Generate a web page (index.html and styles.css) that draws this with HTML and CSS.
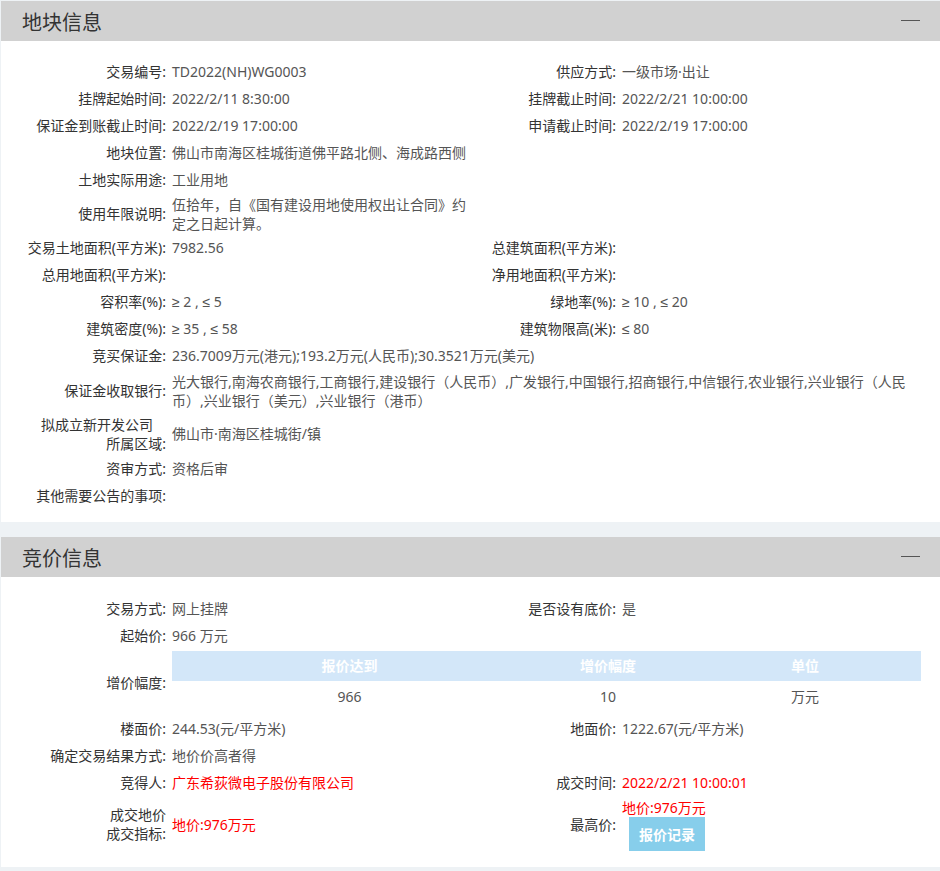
FILE: index.html
```html
<!DOCTYPE html>
<html>
<head>
	<title>地块信息</title>
	<meta charset="UTF-8" />
	<link rel="stylesheet" href="styles.css">
</head>
<body>

<div class="panel">
	<div class="panel-head">
		<span class="panel-title">地块信息</span>
		<span class="collapse"></span>
	</div>
	<div class="panel-body">
		<div class="info-grid">
			<div class="lbl">交易编号:</div>
			<div class="val">TD2022(NH)WG0003</div>
			<div class="lbl">供应方式:</div>
			<div class="val">一级市场·出让</div>

			<div class="lbl">挂牌起始时间:</div>
			<div class="val">2022/2/11 8:30:00</div>
			<div class="lbl">挂牌截止时间:</div>
			<div class="val">2022/2/21 10:00:00</div>

			<div class="lbl">保证金到账截止时间:</div>
			<div class="val">2022/2/19 17:00:00</div>
			<div class="lbl">申请截止时间:</div>
			<div class="val">2022/2/19 17:00:00</div>

			<div class="lbl">地块位置:</div>
			<div class="val span">佛山市南海区桂城街道佛平路北侧、海成路西侧</div>

			<div class="lbl">土地实际用途:</div>
			<div class="val span">工业用地</div>

			<div class="lbl">使用年限说明:</div>
			<div class="val">伍拾年，自《国有建设用地使用权出让合同》约定之日起计算。</div>
			<div class="lbl"></div>
			<div class="val"></div>

			<div class="lbl">交易土地面积(平方米):</div>
			<div class="val">7982.56</div>
			<div class="lbl">总建筑面积(平方米):</div>
			<div class="val"></div>

			<div class="lbl">总用地面积(平方米):</div>
			<div class="val"></div>
			<div class="lbl">净用地面积(平方米):</div>
			<div class="val"></div>

			<div class="lbl">容积率(%):</div>
			<div class="val"><span class="op">≥</span> 2 , <span class="op">≤</span> 5</div>
			<div class="lbl">绿地率(%):</div>
			<div class="val"><span class="op">≥</span> 10 , <span class="op">≤</span> 20</div>

			<div class="lbl">建筑密度(%):</div>
			<div class="val"><span class="op">≥</span> 35 , <span class="op">≤</span> 58</div>
			<div class="lbl">建筑物限高(米):</div>
			<div class="val"><span class="op">≤</span> 80</div>

			<div class="lbl">竞买保证金:</div>
			<div class="val span">236.7009万元(港元);193.2万元(人民币);30.3521万元(美元)</div>

			<div class="lbl">保证金收取银行:</div>
			<div class="val span two">光大银行,南海农商银行,工商银行,建设银行（人民币）,广发银行,中国银行,招商银行,中信银行,农业银行,兴业银行（人民币）,兴业银行（美元）,兴业银行（港币）</div>

			<div class="lbl two"><span class="lbl-first">拟成立新开发公司</span>所属区域:</div>
			<div class="val span">佛山市·南海区桂城街/镇</div>

			<div class="lbl">资审方式:</div>
			<div class="val span">资格后审</div>

			<div class="lbl">其他需要公告的事项:</div>
			<div class="val span"></div>
		</div>
	</div>
</div>

<div class="panel">
	<div class="panel-head">
		<span class="panel-title">竞价信息</span>
		<span class="collapse"></span>
	</div>
	<div class="panel-body panel-body-last">
		<div class="info-grid">
			<div class="lbl">交易方式:</div>
			<div class="val">网上挂牌</div>
			<div class="lbl">是否设有底价:</div>
			<div class="val">是</div>

			<div class="lbl">起始价:</div>
			<div class="val span">966 万元</div>

			<div class="lbl">增价幅度:</div>
			<div class="val span table-cell">
				<table class="step-table">
					<thead>
						<tr>
							<th class="col-reach">报价达到</th>
							<th class="col-step">增价幅度</th>
							<th class="col-unit">单位</th>
						</tr>
					</thead>
					<tbody>
						<tr>
							<td>966</td>
							<td>10</td>
							<td>万元</td>
						</tr>
					</tbody>
				</table>
			</div>

			<div class="lbl">楼面价:</div>
			<div class="val">244.53(元/平方米)</div>
			<div class="lbl">地面价:</div>
			<div class="val">1222.67(元/平方米)</div>

			<div class="lbl">确定交易结果方式:</div>
			<div class="val span">地价价高者得</div>

			<div class="lbl">竞得人:</div>
			<div class="val red">广东希荻微电子股份有限公司</div>
			<div class="lbl">成交时间:</div>
			<div class="val red">2022/2/21 10:00:01</div>

			<div class="lbl">成交地价<br>成交指标:</div>
			<div class="val red">地价:976万元</div>
			<div class="lbl">最高价:</div>
			<div class="val">
				<div class="red">地价:976万元</div>
				<button class="btn-record" type="button">报价记录</button>
			</div>
		</div>
	</div>
</div>

</body>
</html>
```

FILE: styles.css
```css
body {
  margin: 0;
  padding: 1px 0 3px 1px;
  background: #eef2f5;
  font-family: "Noto Sans", "Noto Sans CJK SC", sans-serif;
  font-size: 14px;
  color: #333;
}

.panel {
  background: #fff;
  margin-bottom: 15px;
}

.panel:last-child {
  margin-bottom: 0;
}

.panel-head {
  display: flex;
  align-items: center;
  justify-content: space-between;
  height: 40px;
  padding: 0 20px 0 21px;
  background: #d1d1d1;
}

.panel-title {
  font-size: 20px;
  color: #333;
}

.collapse {
  width: 19px;
  height: 1px;
  margin-bottom: 1px;
  background: #555;
}

.panel-body {
  padding: 17px 0 13px 25px;
}

.panel-body-last {
  padding-top: 18px;
  padding-bottom: 15px;
}

.info-grid {
  display: grid;
  grid-template-columns: 146px 304px 146px 299px;
  grid-auto-rows: minmax(27px, auto);
  align-items: center;
}

.lbl,
.val {
  padding: 1.5px 0;
  line-height: 19px;
}

.lbl {
  text-align: right;
  padding-right: 6px;
  white-space: nowrap;
  color: #333;
}

.lbl-first {
  display: block;
  padding-right: 13px;
}

.two {
  padding-top: 2.5px;
  padding-bottom: 2.5px;
}

.val {
  color: #555;
}

.op {
  font-family: "Liberation Sans", sans-serif;
}

.span {
  grid-column: span 3;
}

.red {
  color: #f00;
}

.table-cell {
  padding: 1.5px 0 3.5px;
}

.step-table {
  width: 749px;
  border-collapse: collapse;
  table-layout: fixed;
}

.step-table th {
  height: 30px;
  padding: 0;
  background: #d3e7f9;
  color: #fff;
  font-weight: bold;
  text-align: center;
}

.step-table td {
  height: 31px;
  padding: 0;
  text-align: center;
  color: #555;
}

.col-reach {
  width: 355px;
}

.col-step {
  width: 162px;
}

.col-unit {
  width: 232px;
}

.btn-record {
  display: block;
  width: 76px;
  height: 34px;
  margin-left: 7px;
  padding: 0;
  border: 0;
  background: #87ceeb;
  color: #fff;
  font-family: inherit;
  font-size: 14px;
  font-weight: bold;
}
```
